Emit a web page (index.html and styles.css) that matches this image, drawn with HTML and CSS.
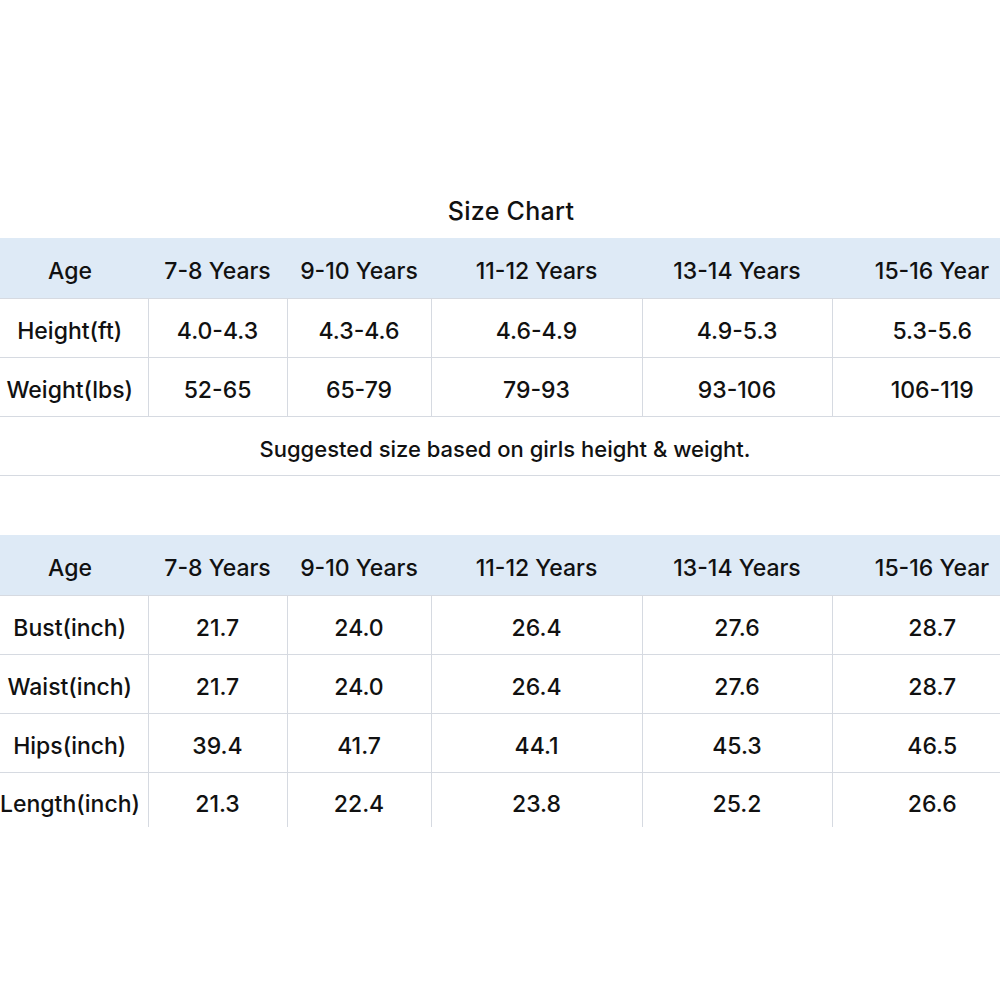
FILE: index.html
```html
<!DOCTYPE html>
<html lang="en">
<head>
<meta charset="utf-8">
<title>Size Chart</title>
<link rel="stylesheet" href="styles.css">
</head>
<body>
<div class="page">
  <h1 class="title">Size Chart</h1>
  <table class="chart">
    <colgroup>
      <col class="c1"><col class="c2"><col class="c3"><col class="c4"><col class="c5"><col class="c6">
    </colgroup>
    <thead>
      <tr class="head"><th class="label">Age</th><th>7-8 Years</th><th>9-10 Years</th><th>11-12 Years</th><th>13-14 Years</th><th>15-16 Year</th></tr>
    </thead>
    <tbody>
      <tr><td class="label">Height(ft)</td><td>4.0-4.3</td><td>4.3-4.6</td><td>4.6-4.9</td><td>4.9-5.3</td><td>5.3-5.6</td></tr>
      <tr><td class="label">Weight(lbs)</td><td>52-65</td><td>65-79</td><td>79-93</td><td>93-106</td><td>106-119</td></tr>
      <tr class="note"><td colspan="6"><span class="note-text">Suggested size based on girls height &amp; weight.</span></td></tr>
    </tbody>
  </table>

  <table class="chart second">
    <colgroup>
      <col class="c1"><col class="c2"><col class="c3"><col class="c4"><col class="c5"><col class="c6">
    </colgroup>
    <thead>
      <tr class="head"><th class="label">Age</th><th>7-8 Years</th><th>9-10 Years</th><th>11-12 Years</th><th>13-14 Years</th><th>15-16 Year</th></tr>
    </thead>
    <tbody class="nums">
      <tr><td class="label">Bust(inch)</td><td>21.7</td><td>24.0</td><td>26.4</td><td>27.6</td><td>28.7</td></tr>
      <tr><td class="label">Waist(inch)</td><td>21.7</td><td>24.0</td><td>26.4</td><td>27.6</td><td>28.7</td></tr>
      <tr><td class="label">Hips(inch)</td><td>39.4</td><td>41.7</td><td>44.1</td><td>45.3</td><td>46.5</td></tr>
      <tr class="last"><td class="label">Length(inch)</td><td>21.3</td><td>22.4</td><td>23.8</td><td>25.2</td><td>26.6</td></tr>
    </tbody>
  </table>
</div>
</body>
</html>
```

FILE: styles.css
```css
html, body {
  margin: 0;
  padding: 0;
  background: #ffffff;
}

.page {
  width: 1000px;
  height: 1000px;
  overflow: hidden;
  padding-top: 193px;
  box-sizing: border-box;
  font-family: "Inter", "Noto Sans CJK SC", sans-serif;
  color: #111111;
}

.title {
  margin: 0 0 9px 0;
  height: 36px;
  line-height: 36px;
  font-size: 25px;
  font-weight: 500;
  letter-spacing: 0.3px;
  text-align: center;
  padding-left: 22px;
}

.chart {
  width: 1032px;
  table-layout: fixed;
  border-collapse: collapse;
  border-spacing: 0;
}

.chart.second {
  margin-top: 59px;
}

.c1 { width: 148px; }
.c2 { width: 139px; }
.c3 { width: 144px; }
.c4 { width: 211px; }
.c5 { width: 190px; }
.c6 { width: 200px; }

.chart th,
.chart td {
  padding: 5px 0 0 0;
  height: 53px;
  text-align: center;
  vertical-align: middle;
  font-size: 23px;
  font-weight: 500;
  white-space: nowrap;
  overflow: hidden;
}

.chart .head th {
  background: #deeaf6;
  height: 55px;
  font-weight: 500;
}

.chart tbody td {
  border-top: 1px solid #d6dae1;
  border-left: 1px solid #d6dae1;
}

.chart tbody td.label {
  border-left: none;
}

.chart .label {
  padding-right: 8px;
}

.chart .note td {
  border-left: none;
  border-bottom: 1px solid #d6dae1;
  padding-right: 22px;
}

.note-text {
  font-size: 22px;
}

.chart .last td {
  height: 54px;
  vertical-align: top;
  padding-top: 17px;
  box-sizing: border-box;
}
```
